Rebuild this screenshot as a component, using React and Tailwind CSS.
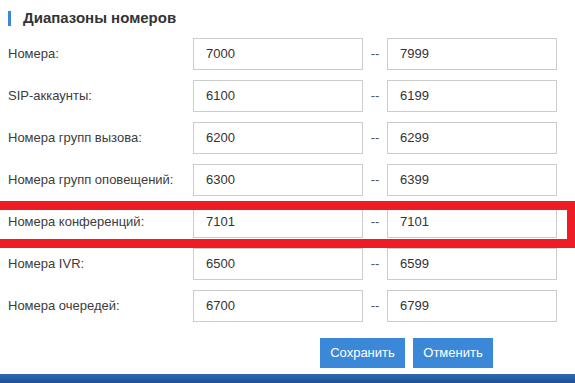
import React from "react";

const rows = [
  { label: "Номера:", from: "7000", to: "7999" },
  { label: "SIP-аккаунты:", from: "6100", to: "6199" },
  { label: "Номера групп вызова:", from: "6200", to: "6299" },
  { label: "Номера групп оповещений:", from: "6300", to: "6399" },
  { label: "Номера конференций:", from: "7101", to: "7101" },
  { label: "Номера IVR:", from: "6500", to: "6599" },
  { label: "Номера очередей:", from: "6700", to: "6799" },
];

function RangeRow({ label, from, to }) {
  return (
    <div className="flex items-center h-[32px]">
      <div className="w-[185px] text-[13px] text-[#3c3c3c]">{label}</div>
      <div className="w-[170px] h-[32px] border border-[#cccccc] flex items-center pl-[12px] text-[13px] text-[#333]">
        {from}
      </div>
      <div className="w-[24px] text-center text-[13px] text-[#555]">--</div>
      <div className="w-[170px] h-[32px] border border-[#cccccc] flex items-center pl-[12px] text-[13px] text-[#333]">
        {to}
      </div>
    </div>
  );
}

export default function App() {
  return (
    <div
      className="relative w-[575px] h-[383px] bg-white overflow-hidden"
      style={{ fontFamily: '"Liberation Sans", Arial, sans-serif' }}
    >
      {/* заголовок */}
      <div className="flex items-center h-[16px] mt-[10px] pl-[8px]">
        <div className="w-[3px] h-[15px] bg-[#3b88d8]" />
        <h2 className="ml-[12px] text-[15px] font-bold text-[#333]">Диапазоны номеров</h2>
      </div>

      {/* диапазоны */}
      <div className="flex flex-col gap-[10px] pl-[8px] mt-[12px]">
        {rows.map((r) => (
          <RangeRow key={r.label} {...r} />
        ))}
      </div>

      {/* кнопки */}
      <div className="flex gap-[8px] pl-[320px] mt-[16px]">
        <button className="w-[85px] h-[30px] bg-[#3b88d8] text-white text-[13px]">Сохранить</button>
        <button className="w-[80px] h-[30px] bg-[#3b88d8] text-white text-[13px]">Отменить</button>
      </div>

      <div className="mt-[6px] h-[9px] bg-gradient-to-b from-[#2d6bb3] to-[#1f5192]" />

      {/* выделение */}
      <div className="absolute left-[-12px] right-0 top-[201px] h-[47px] border-[9px] border-r-[8px] border-[#ee1c25]" />
    </div>
  );
}
